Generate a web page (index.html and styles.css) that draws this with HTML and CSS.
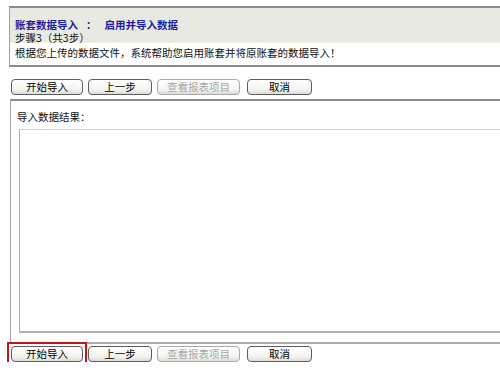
FILE: index.html
```html
<!DOCTYPE html>
<html>
<head>
<meta charset="utf-8">
<link rel="stylesheet" href="styles.css">
</head>
<body>
<div class="panel">
  <div class="head">
    <div class="title">账套数据导入<span class="colon">：</span>启用并导入数据</div>
    <div class="step">步骤3（共3步）</div>
  </div>
  <div class="desc">根据您上传的数据文件，系统帮助您启用账套并将原账套的数据导入！</div>
</div>
<div class="toolbar top">
  <span class="btn b1">开始导入</span>
  <span class="btn b2">上一步</span>
  <span class="btn b3 disabled">查看报表项目</span>
  <span class="btn b4">取消</span>
</div>
<div class="result">
  <div class="label">导入数据结果：</div>
  <div class="area"></div>
</div>
<div class="toolbar bottom">
  <span class="mark"><span class="btn b1">开始导入</span></span>
  <span class="btn b2">上一步</span>
  <span class="btn b3 disabled">查看报表项目</span>
  <span class="btn b4">取消</span>
</div>
</body>
</html>
```
FILE: styles.css
```css
html, body {
  margin: 0;
  padding: 0;
  background: #fff;
  overflow: hidden;
}
body {
  padding-top: 6px;
  font-family: "Noto Sans CJK SC", "DejaVu Sans", sans-serif;
  font-size: 10.5px;
  color: #111;
  width: 500px;
}
.panel {
  margin-left: 9px;
  width: 600px;
  border-top: 2px solid #8c8c8c;
  border-left: 1px solid #a0a0a0;
  border-bottom: 2px solid #8c8c8c;
}
.head {
  background: #e9e9e4;
  height: 35px;
  box-sizing: border-box;
  padding: 10px 0 0 5px;
  line-height: 13px;
  border-bottom: 1px solid #f1f1e0;
}
.title {
  font-weight: bold;
  color: #1e1e9e;
}
.colon {
  margin: 0 8px;
}
.desc {
  height: 22px;
  box-sizing: border-box;
  padding: 3px 0 0 5px;
  line-height: 14px;
}
.toolbar {
  display: flex;
  margin-left: 11px;
  height: 16px;
}
.toolbar.top {
  margin-top: 12px;
}
.toolbar.bottom {
  margin-top: 2px;
}
.btn {
  display: block;
  box-sizing: border-box;
  height: 16px;
  line-height: 14px;
  text-align: center;
  border: 1px solid #5e5e5e;
  border-radius: 4px;
  background: linear-gradient(#ffffff, #f3f3ee 70%, #dcdcd6);
  color: #000;
}
.b1 { width: 72px; }
.b2 { width: 64px; margin-left: 5px; }
.b3 { width: 83px; margin-left: 5px; }
.b4 { width: 65px; margin-left: 7px; }
.btn.disabled {
  color: #a8a8a8;
  border-color: #a9a9a9;
}
.mark {
  position: relative;
  display: block;
}
.mark::after {
  content: "";
  position: absolute;
  left: -4px;
  top: -4px;
  width: 80px;
  height: 25px;
  box-sizing: border-box;
  border: 2px solid #c8121a;
}
.result {
  margin-top: 4px;
  margin-left: 10px;
  width: 600px;
  border-top: 2px solid #8c8c8c;
  border-left: 1px solid #a4a4a4;
  border-bottom: 2px solid #acacac;
  padding: 9px 0 9px 0;
}
.label {
  line-height: 14px;
  padding-left: 6px;
}
.area {
  margin: 5px 0 0 8px;
  height: 204px;
  box-sizing: border-box;
  border-top: 1px solid #cfcfcf;
  border-left: 1px solid #b0b0b0;
  border-bottom: 2px solid #b0b0b0;
}
```
